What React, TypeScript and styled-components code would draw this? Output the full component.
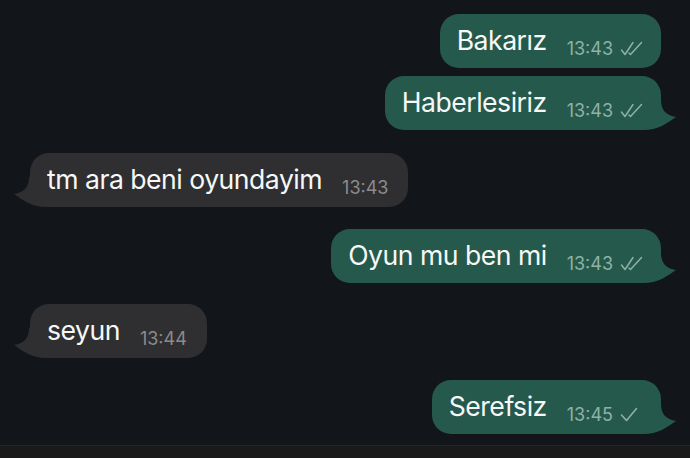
import React from "react";
import styled, { createGlobalStyle } from "styled-components";

const Global = createGlobalStyle`
  html, body { margin: 0; padding: 0; background: #121519; }
  body { font-family: Inter, "Liberation Sans", sans-serif; }
`;

const Screen = styled.div`
  width: 690px;
  height: 458px;
  display: flex;
  flex-direction: column;
  background: #121519;
  overflow: hidden;
`;

const Thread = styled.div`
  flex: 1;
  display: flex;
  flex-direction: column;
  padding: 14px 29px 0 30px;
`;

const Row = styled.div<{ $out: boolean; $gap: number }>`
  display: flex;
  justify-content: ${(p) => (p.$out ? "flex-end" : "flex-start")};
  margin-top: ${(p) => p.$gap}px;
`;

const Bubble = styled.div<{ $out: boolean }>`
  position: relative;
  height: 54px;
  box-sizing: border-box;
  padding: 0 ${(p) => (p.$out ? 18 : 20)}px 0 17px;
  border-radius: 19px;
  background: ${(p) => (p.$out ? "#25594b" : "#2f2f31")};
  display: flex;
  align-items: center;
  white-space: nowrap;
`;

const Line = styled.div`
  line-height: 30px;
  padding-top: 6px;
`;

const Body = styled.span`
  font-size: 26.6px;
  color: #f6f7f7;
  letter-spacing: -0.5px;
`;

const Meta = styled.span<{ $out: boolean }>`
  display: inline-flex;
  align-items: center;
  gap: 7px;
  margin-left: 20px;
  font-size: 18px;
  vertical-align: -5px;
  color: ${(p) => (p.$out ? "#8fb1a6" : "#8b8b8e")};
`;

const Tail = styled.svg<{ $out: boolean }>`
  position: absolute;
  bottom: 0;
  width: 34px;
  height: 30px;
  ${(p) => (p.$out ? "right: -16px;" : "left: -17px; transform: scaleX(-1);")}
`;

const Footer = styled.div`
  height: 12px;
  border-top: 1px solid #24262a;
  background: #1a1a1a;
`;

const DoubleCheck = () => (
  <svg width="23" height="15" viewBox="0 0 23 15" fill="none" stroke="currentColor" strokeWidth="1.5" strokeLinecap="round" strokeLinejoin="round">
    <path d="M1.5 9 L5 13.5 L13 1.5" />
    <path d="M9 12 L10.5 13.5 L21.5 1.5" />
  </svg>
);

const SingleCheck = () => (
  <svg width="23" height="15" viewBox="0 0 23 15" fill="none" stroke="currentColor" strokeWidth="1.6" strokeLinecap="round" strokeLinejoin="round">
    <path d="M1.5 8 L6.5 13.5 L16.5 1.5" />
  </svg>
);

type Msg = {
  text: string;
  time: string;
  out: boolean;
  gap: number;
  tail: boolean;
  check?: "double" | "single";
};

const messages: Msg[] = [
  { text: "Bakarız", time: "13:43", out: true, gap: 0, tail: false, check: "double" },
  { text: "Haberlesiriz", time: "13:43", out: true, gap: 8, tail: true, check: "double" },
  { text: "tm ara beni oyundayim", time: "13:43", out: false, gap: 23, tail: true },
  { text: "Oyun mu ben mi", time: "13:43", out: true, gap: 22, tail: true, check: "double" },
  { text: "seyun", time: "13:44", out: false, gap: 21, tail: true },
  { text: "Serefsiz", time: "13:45", out: true, gap: 22, tail: true, check: "single" },
];

export default function App() {
  return (
    <Screen>
      <Global />
      <Thread>
        {messages.map((m, i) => (
          <Row key={i} $out={m.out} $gap={m.gap}>
            <Bubble $out={m.out}>
              <Line>
                <Body>{m.text}</Body>
                <Meta $out={m.out}>
                  {m.time}
                  {m.check === "double" && <DoubleCheck />}
                  {m.check === "single" && <SingleCheck />}
                </Meta>
              </Line>
              {m.tail && (
                <Tail $out={m.out} viewBox="0 0 34 30">
                  <path
                    d="M0 0 L18 0 C18 10 23 15.5 33 17 C25 22 17 30 0 30 Z"
                    fill={m.out ? "#25594b" : "#2f2f31"}
                  />
                </Tail>
              )}
            </Bubble>
          </Row>
        ))}
      </Thread>
      <Footer />
    </Screen>
  );
}
